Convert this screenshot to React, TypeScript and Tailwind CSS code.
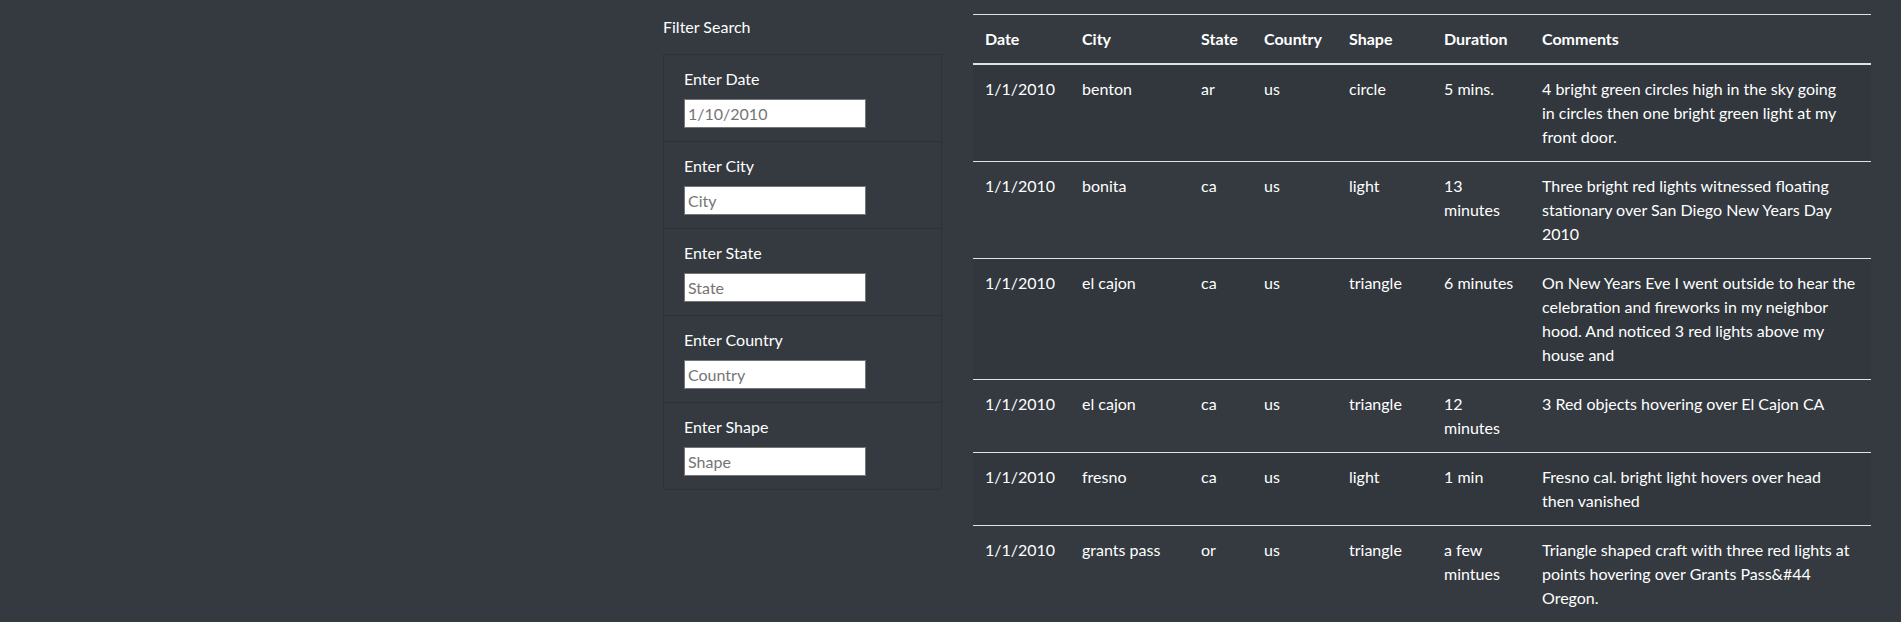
const fields = ['Date', 'City', 'State', 'Country', 'Shape']

const rows = [
  { date: '1/1/2010', city: 'benton', state: 'ar', country: 'us', shape: 'circle', duration: ['5 mins.'], comments: ['4 bright green circles high in the sky going', 'in circles then one bright green light at my', 'front door.'] },
  { date: '1/1/2010', city: 'bonita', state: 'ca', country: 'us', shape: 'light', duration: ['13', 'minutes'], comments: ['Three bright red lights witnessed floating', 'stationary over San Diego New Years Day', '2010'] },
  { date: '1/1/2010', city: 'el cajon', state: 'ca', country: 'us', shape: 'triangle', duration: ['6 minutes'], comments: ['On New Years Eve I went outside to hear the', 'celebration and fireworks in my neighbor', 'hood. And noticed 3 red lights above my', 'house and'] },
  { date: '1/1/2010', city: 'el cajon', state: 'ca', country: 'us', shape: 'triangle', duration: ['12', 'minutes'], comments: ['3 Red objects hovering over El Cajon CA'] },
  { date: '1/1/2010', city: 'fresno', state: 'ca', country: 'us', shape: 'light', duration: ['1 min'], comments: ['Fresno cal. bright light hovers over head', 'then vanished'] },
  { date: '1/1/2010', city: 'grants pass', state: 'or', country: 'us', shape: 'triangle', duration: ['a few', 'mintues'], comments: ['Triangle shaped craft with three red lights at', 'points hovering over Grants Pass&#44', 'Oregon.'] },
]

function Lines({ lines }: { lines: string[] }) {
  return (
    <>
      {lines.map((l, i) => (
        <span key={i} className="block whitespace-nowrap">{l}</span>
      ))}
    </>
  )
}

export default function App() {
  return (
    <div className="min-h-screen bg-[#343a40] text-white text-base leading-6 font-['Lato','Segoe_UI',sans-serif] overflow-hidden">
      <div className="flex items-start pl-[663px]">
        {/* Filter panel */}
        <aside className="w-[279px] pt-[15px] shrink-0">
          <p className="mb-[15px]">Filter Search</p>
          <ul className="border border-[#2d3237] rounded-b">
            {fields.map((f, i) => (
              <li key={f} className={`px-5 pt-3 pb-[13px] ${i > 0 ? 'border-t border-[#2d3237]' : ''}`}>
                <label className="block mb-2">Enter {f}</label>
                <input
                  type="text"
                  placeholder={f === 'Date' ? '1/10/2010' : f}
                  className="block w-[182px] h-[29px] bg-white border border-[#767676] px-[3px] text-base text-black placeholder:text-[#757575] outline-none"
                />
              </li>
            ))}
          </ul>
        </aside>

        {/* Results table */}
        <main className="ml-[31px] w-[898px] pt-[14px] shrink-0">
          <table className="w-full table-fixed border-collapse text-left">
            <colgroup>
              <col className="w-[97px]" />
              <col className="w-[119px]" />
              <col className="w-[63px]" />
              <col className="w-[85px]" />
              <col className="w-[95px]" />
              <col className="w-[98px]" />
              <col className="w-[341px]" />
            </colgroup>
            <thead>
              <tr>
                {['Date', 'City', 'State', 'Country', 'Shape', 'Duration', 'Comments'].map((h) => (
                  <th key={h} className="p-3 font-bold border-t border-b-2 border-[#dee2e6] align-bottom whitespace-nowrap">{h}</th>
                ))}
              </tr>
            </thead>
            <tbody>
              {rows.map((r, i) => (
                <tr key={i} className={i % 2 === 0 ? 'bg-black/5' : ''}>
                  <td className="p-3 border-t border-[#dee2e6] align-top whitespace-nowrap">{r.date}</td>
                  <td className="p-3 border-t border-[#dee2e6] align-top whitespace-nowrap">{r.city}</td>
                  <td className="p-3 border-t border-[#dee2e6] align-top">{r.state}</td>
                  <td className="p-3 border-t border-[#dee2e6] align-top">{r.country}</td>
                  <td className="p-3 border-t border-[#dee2e6] align-top">{r.shape}</td>
                  <td className="p-3 border-t border-[#dee2e6] align-top"><Lines lines={r.duration} /></td>
                  <td className="p-3 border-t border-[#dee2e6] align-top"><Lines lines={r.comments} /></td>
                </tr>
              ))}
            </tbody>
          </table>
        </main>
      </div>
    </div>
  )
}
